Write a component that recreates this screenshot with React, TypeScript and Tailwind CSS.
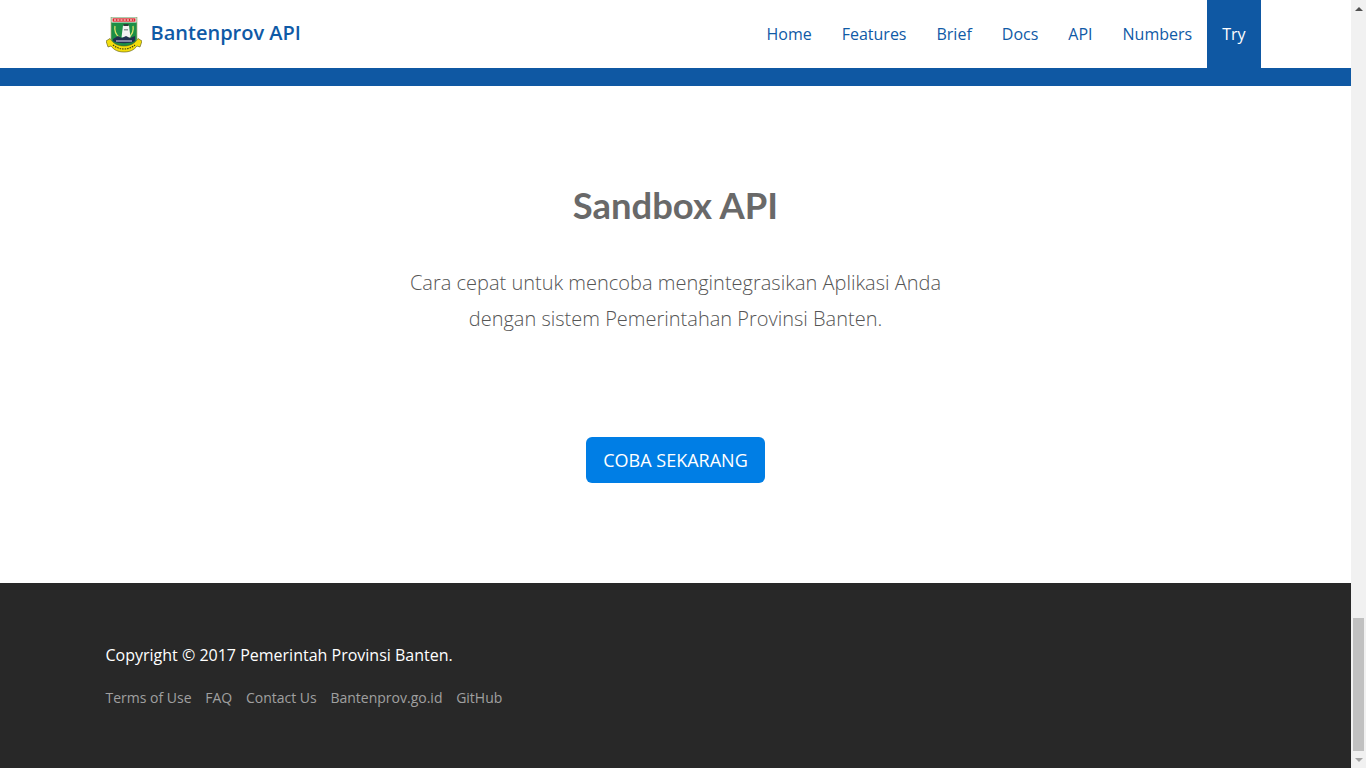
const navItems = ["Home", "Features", "Brief", "Docs", "API", "Numbers"];
const footerLinks = ["Terms of Use", "FAQ", "Contact Us", "Bantenprov.go.id", "GitHub"];

// Banten crest, drawn by hand
function Logo() {
  return (
    <svg width="36" height="36" viewBox="0 0 36 36" className="mt-[2px] shrink-0">
      <path d="M5 0h26v22c0 4-6 7-13 9C11 29 5 26 5 22z" fill="#1c8f46" stroke="#b9ad7a" strokeWidth="0.700" />
      <rect x="5.500" y="0.500" width="25" height="5" fill="#fff" />
      <rect x="6.500" y="1.300" width="23" height="3.400" fill="#d8262c" />
      <path d="M8 3h20" stroke="#fff" strokeWidth="1.200" strokeDasharray="2.200 1" />
      <path d="M9 9c-1 5 1 9 5 12M27 9c1 5-1 9-5 12" stroke="#d9e26a" strokeWidth="1.300" fill="none" />
      <path d="M17 8.500h6l1.500 12h-9z" fill="#f2f2f2" />
      <rect x="17.500" y="7" width="5" height="2" fill="#2f3a3a" />
      <rect x="18" y="12" width="4" height="1.500" fill="#8f9a9a" />
      <path d="M7 22l5-3 4 2 4-2 4 2 5-2v5c-4 3-18 3-22 0z" fill="#20304f" />
      <path d="M10 24h16" stroke="#c8c2e0" strokeWidth="1.200" />
      <path d="M0 24l4-2.500c3 5 8 7.500 14 7.500s11-2.500 14-7.500l4 2.500-2 6-3-1c-3 4-7 6-13 6s-10-2-13-6l-3 1z" fill="#f3de0c" stroke="#55551c" strokeWidth="0.600" />
      <path d="M7 28c3 2.500 7 4 11 4s8-1.500 11-4" stroke="#3d3d18" strokeWidth="1.100" strokeDasharray="1.500 1" fill="none" />
    </svg>
  );
}

export default function App() {
  return (
    <div className="flex h-screen overflow-hidden bg-white font-['Open_Sans',sans-serif]">
      <div className="flex min-w-0 flex-1 flex-col">
        <header className="h-[68px] shrink-0 bg-white">
          <div className="mx-auto flex h-full w-[1170px] items-center justify-between px-[15px]">
            <a className="flex items-center gap-[9px] text-[#0f5aa6]">
              <Logo />
              <span className="mb-[2px] text-[20px] font-semibold leading-none">Bantenprov API</span>
            </a>
            <nav className="-mr-[15px] flex h-full text-[16px] text-[#0f5aa6]">
              {navItems.map((item) => (
                <a key={item} className="flex h-full items-center px-[15px]">
                  {item}
                </a>
              ))}
              <a className="flex h-full items-center bg-[#0f58a3] px-[15px] text-white">Try</a>
            </nav>
          </div>
        </header>
        <div className="h-[18px] shrink-0 bg-[#0f58a3]" />

        <section className="flex h-[497px] shrink-0 flex-col items-center bg-white">
          <h2 className="mt-[94px] font-['Lato',sans-serif] text-[36.4px] font-bold leading-[50px] text-[#696969]">
            Sandbox API
          </h2>
          <p className="mt-[35px] text-center text-[20px] font-light leading-[36px] text-[#555]">
            Cara cepat untuk mencoba mengintegrasikan Aplikasi Anda
            <br />
            dengan sistem Pemerintahan Provinsi Banten.
          </p>
          <a className="mt-[100px] flex h-[46px] w-[179px] items-center justify-center rounded-[6px] bg-[#007ee5] text-[18px] text-white">
            COBA SEKARANG
          </a>
        </section>

        <footer className="flex-1 bg-[#282828]">
          <div className="mx-auto w-[1170px] px-[15px] pt-[60px]">
            <p className="text-[16px] leading-[24px] text-white">Copyright © 2017 Pemerintah Provinsi Banten.</p>
            <div className="mt-[21px] flex gap-[13.7px] text-[14px] leading-[20px] text-[#a0a0a0]">
              {footerLinks.map((link) => (
                <a key={link}>{link}</a>
              ))}
            </div>
          </div>
        </footer>
      </div>

      {/* page scrollbar */}
      <div className="flex w-[15px] shrink-0 flex-col bg-[#f1f1f1]">
        <div className="flex h-[17px] items-center justify-center">
          <div className="h-0 w-0 border-x-[4px] border-b-[4px] border-x-transparent border-b-[#505050]" />
        </div>
        <div className="flex-1 pt-[601px]">
          <div className="mx-[2px] h-full bg-[#c1c1c1]" />
        </div>
        <div className="flex h-[17px] items-center justify-center">
          <div className="h-0 w-0 border-x-[4px] border-t-[4px] border-x-transparent border-t-[#a3a3a3]" />
        </div>
      </div>
    </div>
  );
}
